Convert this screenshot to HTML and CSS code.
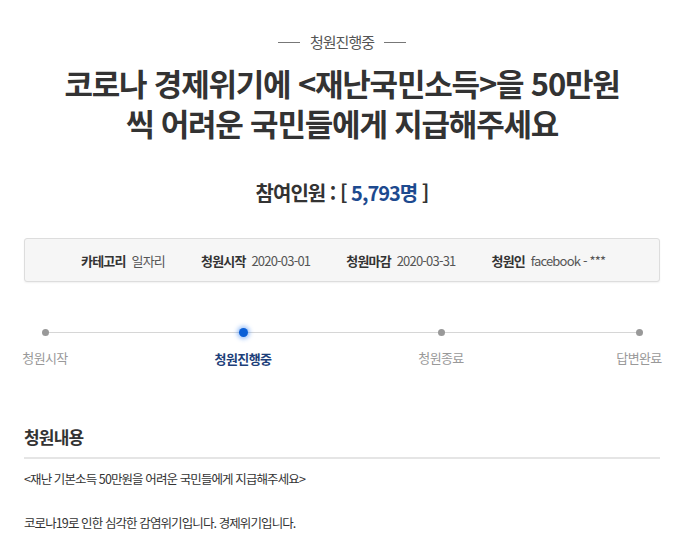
FILE: index.html
```html
<!DOCTYPE html>
<html lang="ko">
<head>
    <meta charset="UTF-8">
    <meta name="viewport" content="width=device-width, initial-scale=1.0">
    <title>청원 상세</title>
    <link rel="stylesheet" href="styles.css">
</head>
<body>
    <div class="page">
        <p class="status"><span class="dash"></span>청원진행중<span class="dash"></span></p>

        <h1 class="title">코로나 경제위기에 &lt;재난국민소득&gt;을 50만원<br>씩 어려운 국민들에게 지급해주세요</h1>

        <h2 class="count">참여인원 : [ <span class="num">5,793명</span> ]</h2>

        <ul class="info">
            <li><b>카테고리</b> 일자리</li>
            <li><b>청원시작</b> 2020-03-01</li>
            <li><b>청원마감</b> 2020-03-31</li>
            <li><b>청원인</b> facebook - ***</li>
        </ul>

        <div class="steps">
            <div class="step"><span class="dot"></span><span class="label">청원시작</span></div>
            <div class="step on"><span class="dot"></span><span class="label">청원진행중</span></div>
            <div class="step"><span class="dot"></span><span class="label">청원종료</span></div>
            <div class="step"><span class="dot"></span><span class="label">답변완료</span></div>
        </div>

        <div class="content">
            <h3>청원내용</h3>
            <p>&lt;재난 기본소득 50만원을 어려운 국민들에게 지급해주세요&gt;</p>
            <p class="gap">코로나19로 인한 심각한 감염위기입니다. 경제위기입니다.</p>
        </div>
    </div>
</body>
</html>
```

FILE: styles.css
```css
body {
    margin: 0;
    font-family: "Noto Sans CJK KR", "Noto Sans", sans-serif;
    color: #333;
    background: #fff;
}

.page {
    width: 636px;
    padding: 0 30px 0 24px;
    border-right: 1px solid #eee;
    min-height: 552px;
    box-sizing: content-box;
}

.status {
    margin: 0;
    padding-top: 31px;
    display: flex;
    justify-content: center;
    align-items: center;
    gap: 10px;
    font-size: 15px;
    line-height: 22px;
    color: #555;
    letter-spacing: -1px;
}

.dash {
    width: 22px;
    height: 1px;
    background: #777;
}

.title {
    margin: 10px 0 0;
    text-align: center;
    font-size: 31px;
    line-height: 40px;
    font-weight: 700;
    letter-spacing: -1.2px;
    color: #333;
}

.count {
    margin: 36px 0 0;
    text-align: center;
    font-size: 20px;
    line-height: 28px;
    font-weight: 700;
    letter-spacing: -1px;
}

.count .num {
    color: #1d4a8f;
}

.info {
    list-style: none;
    margin: 31px 0 0;
    padding: 0 0 0 56px;
    height: 42px;
    display: flex;
    align-items: center;
    background: #f6f6f6;
    border: 1px solid #ddd;
    border-radius: 3px;
    box-shadow: 0 1px 2px rgba(0, 0, 0, 0.06);
    font-size: 13px;
    color: #555;
    letter-spacing: -0.8px;
}

.info li {
    white-space: nowrap;
    margin-right: 36px;
}

.info b {
    color: #333;
    margin-right: 3px;
}

.steps {
    margin-top: 45px;
    display: flex;
    justify-content: space-between;
    position: relative;
}

.steps::before {
    content: "";
    position: absolute;
    left: 20px;
    right: 20px;
    top: 5px;
    height: 1px;
    background: #d6d6d6;
}

.step {
    position: relative;
    display: flex;
    flex-direction: column;
    align-items: center;
    width: 42px;
}

.dot {
    width: 7px;
    height: 7px;
    margin-top: 2px;
    border-radius: 50%;
    background: #999;
}

.label {
    margin-top: 12px;
    font-size: 13px;
    white-space: nowrap;
    color: #999;
    letter-spacing: -0.6px;
}

.step.on .dot {
    width: 9px;
    height: 9px;
    margin-top: 1px;
    background: #0b5fd6;
    box-shadow: 0 0 4px 2px rgba(40, 120, 240, 0.45);
}

.step.on .label {
    color: #1d3f7a;
    font-weight: 700;
}

.content {
    margin-top: 57px;
}

.content h3 {
    margin: 0;
    padding-bottom: 8px;
    border-bottom: 2px solid #e5e5e5;
    font-size: 17px;
    line-height: 24px;
    font-weight: 700;
    letter-spacing: -0.8px;
}

.content p {
    margin: 10px 0 0;
    font-size: 12.5px;
    line-height: 20px;
    letter-spacing: -0.9px;
}

.content p.gap {
    margin-top: 24px;
}
```
